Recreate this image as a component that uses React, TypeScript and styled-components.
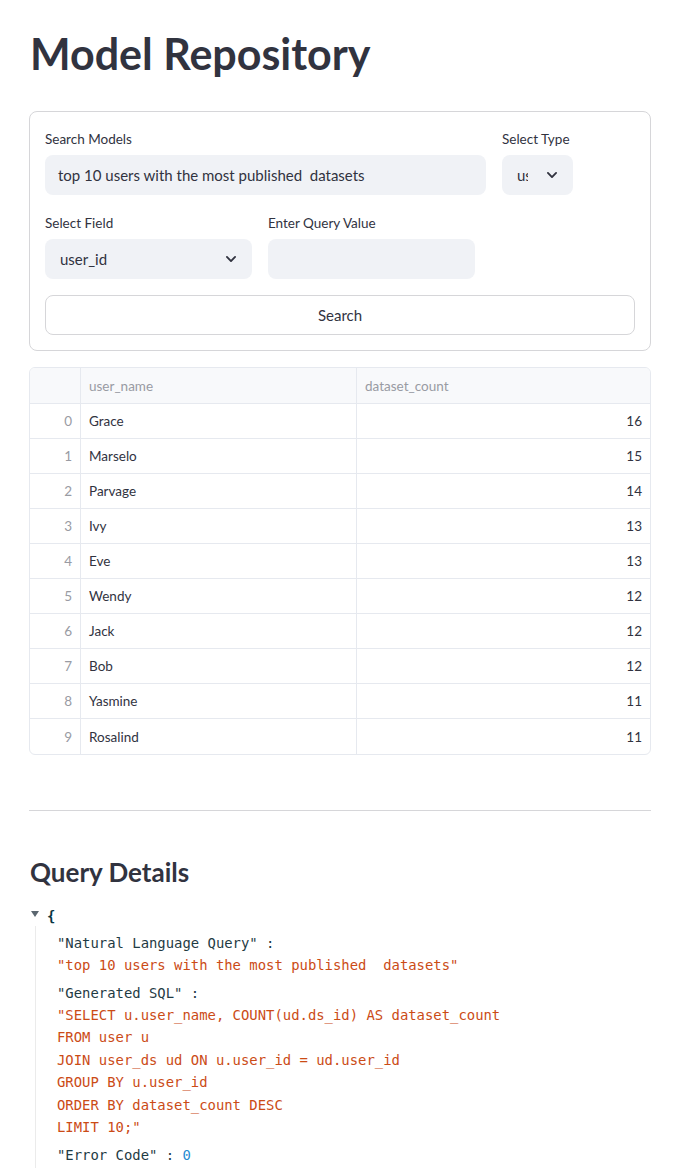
import React from "react";
import styled, { createGlobalStyle } from "styled-components";

const GlobalStyle = createGlobalStyle`
  body {
    margin: 0;
    background: #ffffff;
    color: #31333f;
    font-family: Lato, "Noto Sans", sans-serif;
  }
`;

const rows: [string, number][] = [
  ["Grace", 16],
  ["Marselo", 15],
  ["Parvage", 14],
  ["Ivy", 13],
  ["Eve", 13],
  ["Wendy", 12],
  ["Jack", 12],
  ["Bob", 12],
  ["Yasmine", 11],
  ["Rosalind", 11],
];

const sqlLines = [
  '"SELECT u.user_name, COUNT(ud.ds_id) AS dataset_count',
  "FROM user u",
  "JOIN user_ds ud ON u.user_id = ud.user_id",
  "GROUP BY u.user_id",
  "ORDER BY dataset_count DESC",
  'LIMIT 10;"',
];

const Chevron = () => (
  <svg width="14" height="14" viewBox="0 0 24 24" fill="none">
    <path d="M5 8.5l7 7 7-7" stroke="#31333f" strokeWidth="3.2" strokeLinecap="round" strokeLinejoin="round" />
  </svg>
);

const App = () => {
  return (
    <Page>
      <GlobalStyle />
      <Title>Model Repository</Title>
      <Form>
        <FieldRow columns="441px 71px">
          <Field>
            <Label>Search Models</Label>
            <TextInput>top 10 users with the most published&nbsp; datasets</TextInput>
          </Field>
          <Field>
            <Label>Select Type</Label>
            <Select>
              <SelectValue narrow>user</SelectValue>
              <Chevron />
            </Select>
          </Field>
        </FieldRow>
        <FieldRow columns="207px 207px">
          <Field>
            <Label>Select Field</Label>
            <Select>
              <SelectValue>user_id</SelectValue>
              <Chevron />
            </Select>
          </Field>
          <Field>
            <Label>Enter Query Value</Label>
            <TextInput />
          </Field>
        </FieldRow>
        <Button>Search</Button>
      </Form>

      <Table>
        <HeadRow>
          <HeadCell />
          <HeadCell>user_name</HeadCell>
          <HeadCell>dataset_count</HeadCell>
        </HeadRow>
        {rows.map(([name, count], i) => (
          <Row key={name} last={i === rows.length - 1}>
            <IndexCell>{i}</IndexCell>
            <Cell>{name}</Cell>
            <Cell align="right">{count}</Cell>
          </Row>
        ))}
      </Table>

      <Divider />

      <SubTitle>Query Details</SubTitle>
      <Json>
        <JsonHead>
          <Caret />
          <Brace>{"{"}</Brace>
        </JsonHead>
        <JsonBody>
          <Entry>
            <Key>"Natural Language Query" :</Key>
            <Str>"top 10 users with the most published  datasets"</Str>
          </Entry>
          <Entry>
            <Key>"Generated SQL" :</Key>
            {sqlLines.map((l) => (
              <Str key={l}>{l}</Str>
            ))}
          </Entry>
          <Entry>
            <Key>
              "Error Code" : <Num>0</Num>
            </Key>
          </Entry>
        </JsonBody>
      </Json>
    </Page>
  );
};

export default App;

const Page = styled.div`
  width: 622px;
  padding: 0 32px 0 29px;
  height: 1168px;
  overflow: hidden;
`;

const Title = styled.h1`
  margin: 0;
  padding: 26px 0 0 1px;
  height: 111px;
  box-sizing: border-box;
  font-size: 43px;
  font-weight: 700;
  line-height: 56px;
  color: #31333f;
`;

const Form = styled.div`
  border: 1px solid #d6d6d9;
  border-radius: 8px;
  padding: 19px 15px 15px;
  display: flex;
  flex-direction: column;
  gap: 20px;
`;

const FieldRow = styled.div<{ columns: string }>`
  display: grid;
  grid-template-columns: ${(p) => p.columns};
  gap: 16px;
`;

const Field = styled.div`
  display: flex;
  flex-direction: column;
  gap: 8px;
  min-width: 0;
`;

const Label = styled.label`
  font-size: 13.5px;
  line-height: 16px;
  color: #31333f;
`;

const TextInput = styled.div`
  height: 40px;
  box-sizing: border-box;
  background: #f0f2f6;
  border-radius: 8px;
  padding: 0 13px;
  display: flex;
  align-items: center;
  font-size: 15px;
  color: #31333f;
  white-space: pre;
`;

const Select = styled.div`
  height: 40px;
  box-sizing: border-box;
  background: #f0f2f6;
  border-radius: 8px;
  padding: 0 14px 0 15px;
  display: flex;
  align-items: center;
  justify-content: space-between;
  gap: 12px;
  font-size: 15px;
`;

const SelectValue = styled.span<{ narrow?: boolean }>`
  overflow: hidden;
  white-space: nowrap;
  ${(p) => (p.narrow ? "width: 11px;" : "")}
`;

const Button = styled.button`
  height: 40px;
  margin-top: -4px;
  border: 1px solid #d6d6d9;
  border-radius: 8px;
  background: #ffffff;
  font-family: Lato, "Noto Sans", sans-serif;
  font-size: 15px;
  color: #31333f;
`;

const Table = styled.div`
  margin-top: 16px;
  border: 1px solid #e6e9ef;
  border-radius: 6px;
  overflow: hidden;
  font-size: 13.5px;
`;

const HeadRow = styled.div`
  display: grid;
  grid-template-columns: 51px 276px 1fr;
  height: 36px;
  background: #f8f9fb;
  border-bottom: 1px solid #e6e9ef;
  box-sizing: border-box;
`;

const HeadCell = styled.div`
  display: flex;
  align-items: center;
  padding: 0 8px;
  color: #999ba3;
  border-right: 1px solid #e6e9ef;
  &:last-child {
    border-right: none;
  }
`;

const Row = styled.div<{ last?: boolean }>`
  display: grid;
  grid-template-columns: 51px 276px 1fr;
  height: 35px;
  box-sizing: border-box;
  border-bottom: ${(p) => (p.last ? "none" : "1px solid #e6e9ef")};
`;

const Cell = styled.div<{ align?: string }>`
  display: flex;
  align-items: center;
  justify-content: ${(p) => (p.align === "right" ? "flex-end" : "flex-start")};
  padding: 0 8px;
  color: #31333f;
  border-right: 1px solid #e6e9ef;
  &:last-child {
    border-right: none;
  }
`;

const IndexCell = styled(Cell)`
  justify-content: flex-end;
  color: #999ba3;
`;

const Divider = styled.hr`
  margin: 55px 0 0;
  border: none;
  border-top: 1px solid #d6d6d9;
`;

const SubTitle = styled.h3`
  margin: 0;
  padding: 44px 0 0 1px;
  font-size: 26px;
  font-weight: 700;
  line-height: 34px;
  color: #31333f;
`;

const Json = styled.div`
  margin-top: 17px;
  font-family: "DejaVu Sans Mono", "Liberation Mono", monospace;
  font-size: 13.9px;
  line-height: 22.4px;
`;

const JsonHead = styled.div`
  display: flex;
  align-items: center;
  gap: 8px;
  padding-left: 2px;
  height: 20px;
`;

const Caret = styled.span`
  width: 0;
  height: 0;
  border-left: 4.5px solid transparent;
  border-right: 4.5px solid transparent;
  border-top: 6px solid #5b6770;
  margin-top: -5px;
`;

const Brace = styled.span`
  color: #073642;
  font-weight: 700;
`;

const JsonBody = styled.div`
  margin-left: 6px;
  border-left: 1px solid #ebebeb;
  padding: 3px 0 0 21px;
`;

const Entry = styled.div`
  padding: 2.6px 0;
`;

const Key = styled.div`
  color: #1f3b44;
  white-space: pre;
`;

const Str = styled.div`
  color: #cb4b16;
  white-space: pre;
`;

const Num = styled.span`
  color: #268bd2;
`;
